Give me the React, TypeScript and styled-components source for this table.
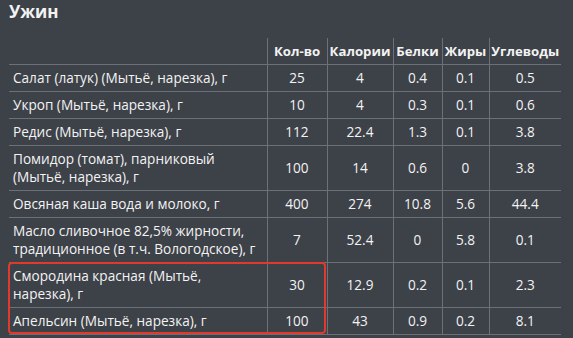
import React from 'react'
import styled, { createGlobalStyle } from 'styled-components'

const GlobalStyle = createGlobalStyle`
  body {
    margin: 0;
    background: #3d4148;
    font-family: "Open Sans", "Liberation Sans", sans-serif;
    color: #f3f3f3;
  }
`

const Page = styled.div`
  padding: 0 0 0 9px;
`

const Title = styled.h2`
  margin: 0 0 14px;
  font-size: 17px;
  line-height: 24px;
  font-weight: 700;
`

const TableWrap = styled.div`
  position: relative;
  width: 552px;
`

const Table = styled.table`
  width: 552px;
  border-collapse: collapse;
  table-layout: fixed;
  font-size: 13.6px;
  line-height: 18px;
`

const HeadCell = styled.th<{ $first?: boolean }>`
  padding: 4px 0;
  font-size: 13.2px;
  font-weight: 700;
  text-align: center;
  white-space: nowrap;
  border-bottom: 1px solid #6d7078;
  border-left: ${({ $first }) => ($first ? 'none' : '1px solid #6d7078')};
`

const Cell = styled.td<{ $name?: boolean }>`
  padding: ${({ $name }) => ($name ? '4px 2px 4px 4px' : '4px 2px')};
  text-align: ${({ $name }) => ($name ? 'left' : 'center')};
  vertical-align: middle;
  border-bottom: 1px solid #6d7078;
  border-left: ${({ $name }) => ($name ? 'none' : '1px solid #6d7078')};
`

const Highlight = styled.div`
  position: absolute;
  left: -1px;
  top: 224px;
  width: 318px;
  height: 72px;
  box-sizing: border-box;
  border: 2px solid #e0392d;
  border-radius: 4px;
  pointer-events: none;
`

const columns = [
  { title: '', width: 258 },
  { title: 'Кол-во', width: 60 },
  { title: 'Калории', width: 66 },
  { title: 'Белки', width: 49 },
  { title: 'Жиры', width: 47 },
  { title: 'Углеводы', width: 72 },
]

const rows: [string, string, string, string, string, string][] = [
  ['Салат (латук) (Мытьё, нарезка), г', '25', '4', '0.4', '0.1', '0.5'],
  ['Укроп (Мытьё, нарезка), г', '10', '4', '0.3', '0.1', '0.6'],
  ['Редис (Мытьё, нарезка), г', '112', '22.4', '1.3', '0.1', '3.8'],
  ['Помидор (томат), парниковый (Мытьё, нарезка), г', '100', '14', '0.6', '0', '3.8'],
  ['Овсяная каша вода и молоко, г', '400', '274', '10.8', '5.6', '44.4'],
  ['Масло сливочное 82,5% жирности, традиционное (в т.ч. Вологодское), г', '7', '52.4', '0', '5.8', '0.1'],
  ['Смородина красная (Мытьё, нарезка), г', '30', '12.9', '0.2', '0.1', '2.3'],
  ['Апельсин (Мытьё, нарезка), г', '100', '43', '0.9', '0.2', '8.1'],
]

const App = () => (
  <Page>
    <GlobalStyle />
    <Title>Ужин</Title>
    <TableWrap>
      <Table>
        <colgroup>
          {columns.map((c, i) => (
            <col key={i} style={{ width: c.width }} />
          ))}
        </colgroup>
        <thead>
          <tr>
            {columns.map((c, i) => (
              <HeadCell key={i} $first={i === 0}>
                {c.title}
              </HeadCell>
            ))}
          </tr>
        </thead>
        <tbody>
          {rows.map((r) => (
            <tr key={r[0]}>
              {r.map((v, i) => (
                <Cell key={i} $name={i === 0}>
                  {v}
                </Cell>
              ))}
            </tr>
          ))}
        </tbody>
      </Table>
      <Highlight />
    </TableWrap>
  </Page>
)

export default App
